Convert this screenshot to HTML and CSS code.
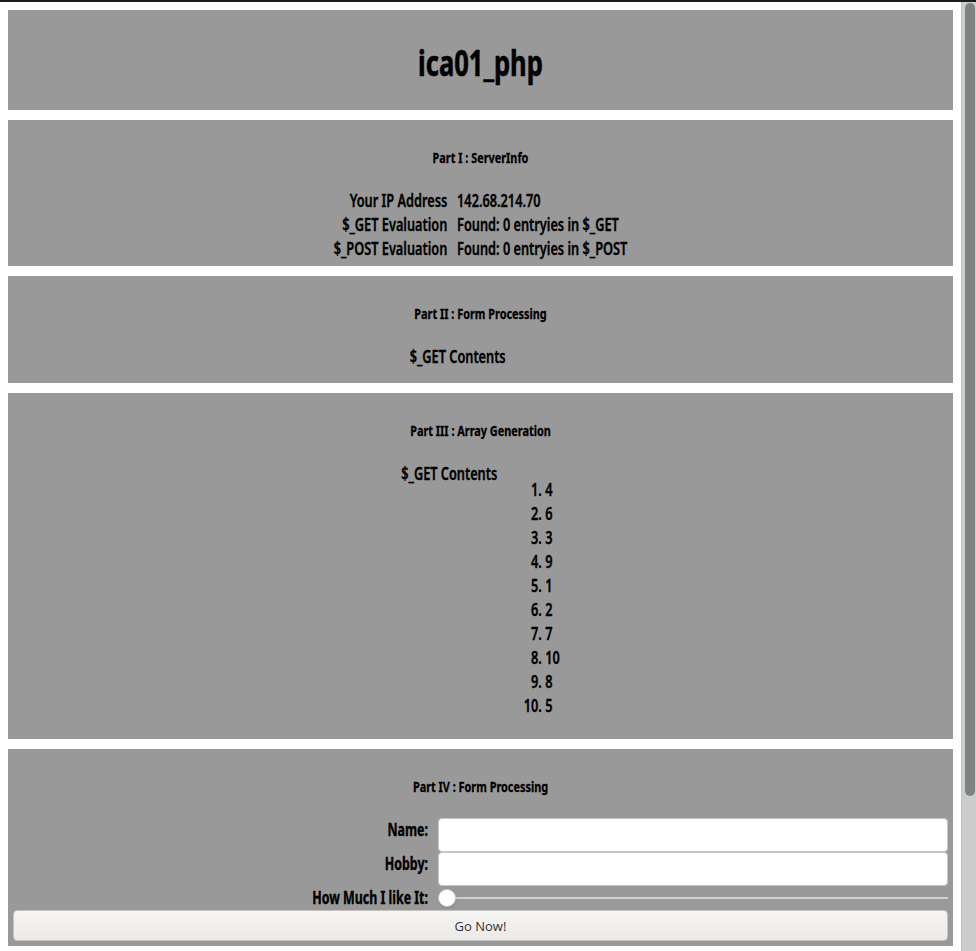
FILE: index.html
```html
<!DOCTYPE html>
<html lang="en">
<head>
<meta charset="utf-8">
<title>ica01_php</title>
<link rel="stylesheet" href="styles.css">
</head>
<body>
<div class="page">
  <main class="content">
    <header class="panel panel-head">
      <h1 class="page-title">ica01_php</h1>
    </header>

    <section class="panel">
      <h2 class="panel-title">Part I : ServerInfo</h2>
      <div class="info">
        <div class="info-label">Your IP Address</div><div class="info-value">142.68.214.70</div>
        <div class="info-label">$_GET Evaluation</div><div class="info-value">Found: 0 entryies in $_GET</div>
        <div class="info-label">$_POST Evaluation</div><div class="info-value">Found: 0 entryies in $_POST</div>
      </div>
    </section>

    <section class="panel panel-short">
      <h2 class="panel-title">Part II : Form Processing</h2>
      <div class="contents">
        <div class="contents-label">$_GET Contents</div>
        <div class="contents-cell contents-empty"></div>
      </div>
    </section>

    <section class="panel">
      <h2 class="panel-title">Part III : Array Generation</h2>
      <div class="contents">
        <div class="contents-label">$_GET Contents</div>
        <div class="contents-cell">
          <ol class="num-list">
            <li>4</li><li>6</li><li>3</li><li>9</li><li>1</li>
            <li>2</li><li>7</li><li>10</li><li>8</li><li>5</li>
          </ol>
        </div>
      </div>
    </section>

    <section class="panel panel-form">
      <h2 class="panel-title">Part IV : Form Processing</h2>
      <form class="form">
        <label class="form-label" for="name">Name:</label>
        <input class="text-input" id="name" type="text">
        <label class="form-label" for="hobby">Hobby:</label>
        <input class="text-input" id="hobby" type="text">
        <label class="form-label" for="much">How Much I like It:</label>
        <input class="range" id="much" type="range" min="0" max="10" value="0">
        <button class="go-btn" type="button">Go Now!</button>
      </form>
    </section>
  </main>
  <div class="scrollbar"><div class="scroll-thumb"></div></div>
</div>
</body>
</html>
```
FILE: styles.css
```css
html, body {
  margin: 0;
  padding: 0;
  overflow: hidden;
}

body {
  background: #ffffff;
  color: #000000;
  font-family: "Noto Sans", "DejaVu Sans Condensed", sans-serif;
  border-top: 2px solid #1c1c1c;
  height: 951px;
  box-sizing: border-box;
}

.page {
  display: flex;
  height: 949px;
}

.content {
  flex: 1;
  min-width: 0;
  padding: 8px 8px 0 8px;
  display: flex;
  flex-direction: column;
  gap: 10px;
}

.panel {
  background: #999999;
  padding: 27px 5px 5px 5px;
  flex-shrink: 0;
}

.panel-head {
  height: 100px;
  padding: 0;
  display: flex;
  align-items: center;
  justify-content: center;
  box-sizing: border-box;
}

/* condensed look: the text face is narrowed horizontally */
.page-title {
  margin: 4px 0 0 0;
  font-size: 35px;
  line-height: 1;
  font-weight: bold;
  -webkit-text-stroke: 0.6px #000;
  transform: scaleX(0.73);
}

.panel-title {
  margin: 0 0 22px 0;
  font-size: 14.5px;
  line-height: 20px;
  font-weight: bold;
  text-align: center;
  -webkit-text-stroke: 0.3px #000;
  transform: scaleX(0.75);
}

.info {
  display: grid;
  grid-template-columns: auto auto;
  justify-content: center;
  column-gap: 13px;
  font-size: 17px;
  line-height: 24px;
  font-weight: 600;
  -webkit-text-stroke: 0.35px #000;
  transform: scaleX(0.75);
}

.info-label {
  text-align: right;
}

.contents {
  display: flex;
  justify-content: center;
  align-items: flex-start;
  font-size: 17px;
  line-height: 24px;
  font-weight: 600;
  -webkit-text-stroke: 0.35px #000;
  transform: scaleX(0.75);
}

.contents-label {
  padding: 0 2px;
}

.contents-cell {
  padding: 0 2px;
}

.contents-empty {
  width: 57px;
  height: 33px;
}

.num-list {
  margin: 16px 0;
  padding-left: 60px;
}

.num-list li {
  line-height: 24px;
}

.form {
  display: grid;
  grid-template-columns: 1fr 510px;
  column-gap: 10px;
  align-items: stretch;
}

.form-label {
  align-self: start;
  text-align: right;
  font-size: 17px;
  line-height: 24px;
  font-weight: bold;
  -webkit-text-stroke: 0.35px #000;
  transform: scaleX(0.73);
  transform-origin: right center;
}

.text-input {
  height: 34px;
  box-sizing: border-box;
  margin: 0;
  border: 1px solid #c9c5c1;
  border-radius: 4px;
  background: #ffffff;
  width: 100%;
}

.range {
  -webkit-appearance: none;
  appearance: none;
  background: transparent;
  margin: 0;
  width: 100%;
  height: 24px;
}

.range::-webkit-slider-runnable-track {
  height: 2px;
  background: #d2cecb;
}

.range::-webkit-slider-thumb {
  -webkit-appearance: none;
  appearance: none;
  width: 18px;
  height: 18px;
  border-radius: 50%;
  background: #ffffff;
  border: 1px solid #cfcbc7;
  box-sizing: border-box;
  margin-top: -8px;
  box-shadow: 0 1px 2px rgba(0, 0, 0, 0.15);
}

.go-btn {
  grid-column: 1 / -1;
  height: 31px;
  margin: 0;
  border: 1px solid #c6c2be;
  border-radius: 4px;
  background: linear-gradient(#f6f5f3, #ebeae8);
  font-family: "Open Sans", "DejaVu Sans", sans-serif;
  font-size: 13px;
  color: #333333;
  cursor: pointer;
}

.scrollbar {
  width: 15px;
  flex-shrink: 0;
  background: #cdcdcd;
  border-left: 1px solid #c4c2c0;
  box-sizing: border-box;
}

.scroll-thumb {
  width: 10px;
  height: 793px;
  margin: 1px 0 0 3px;
  border-radius: 5px;
  background: #7e8282;
}
```
